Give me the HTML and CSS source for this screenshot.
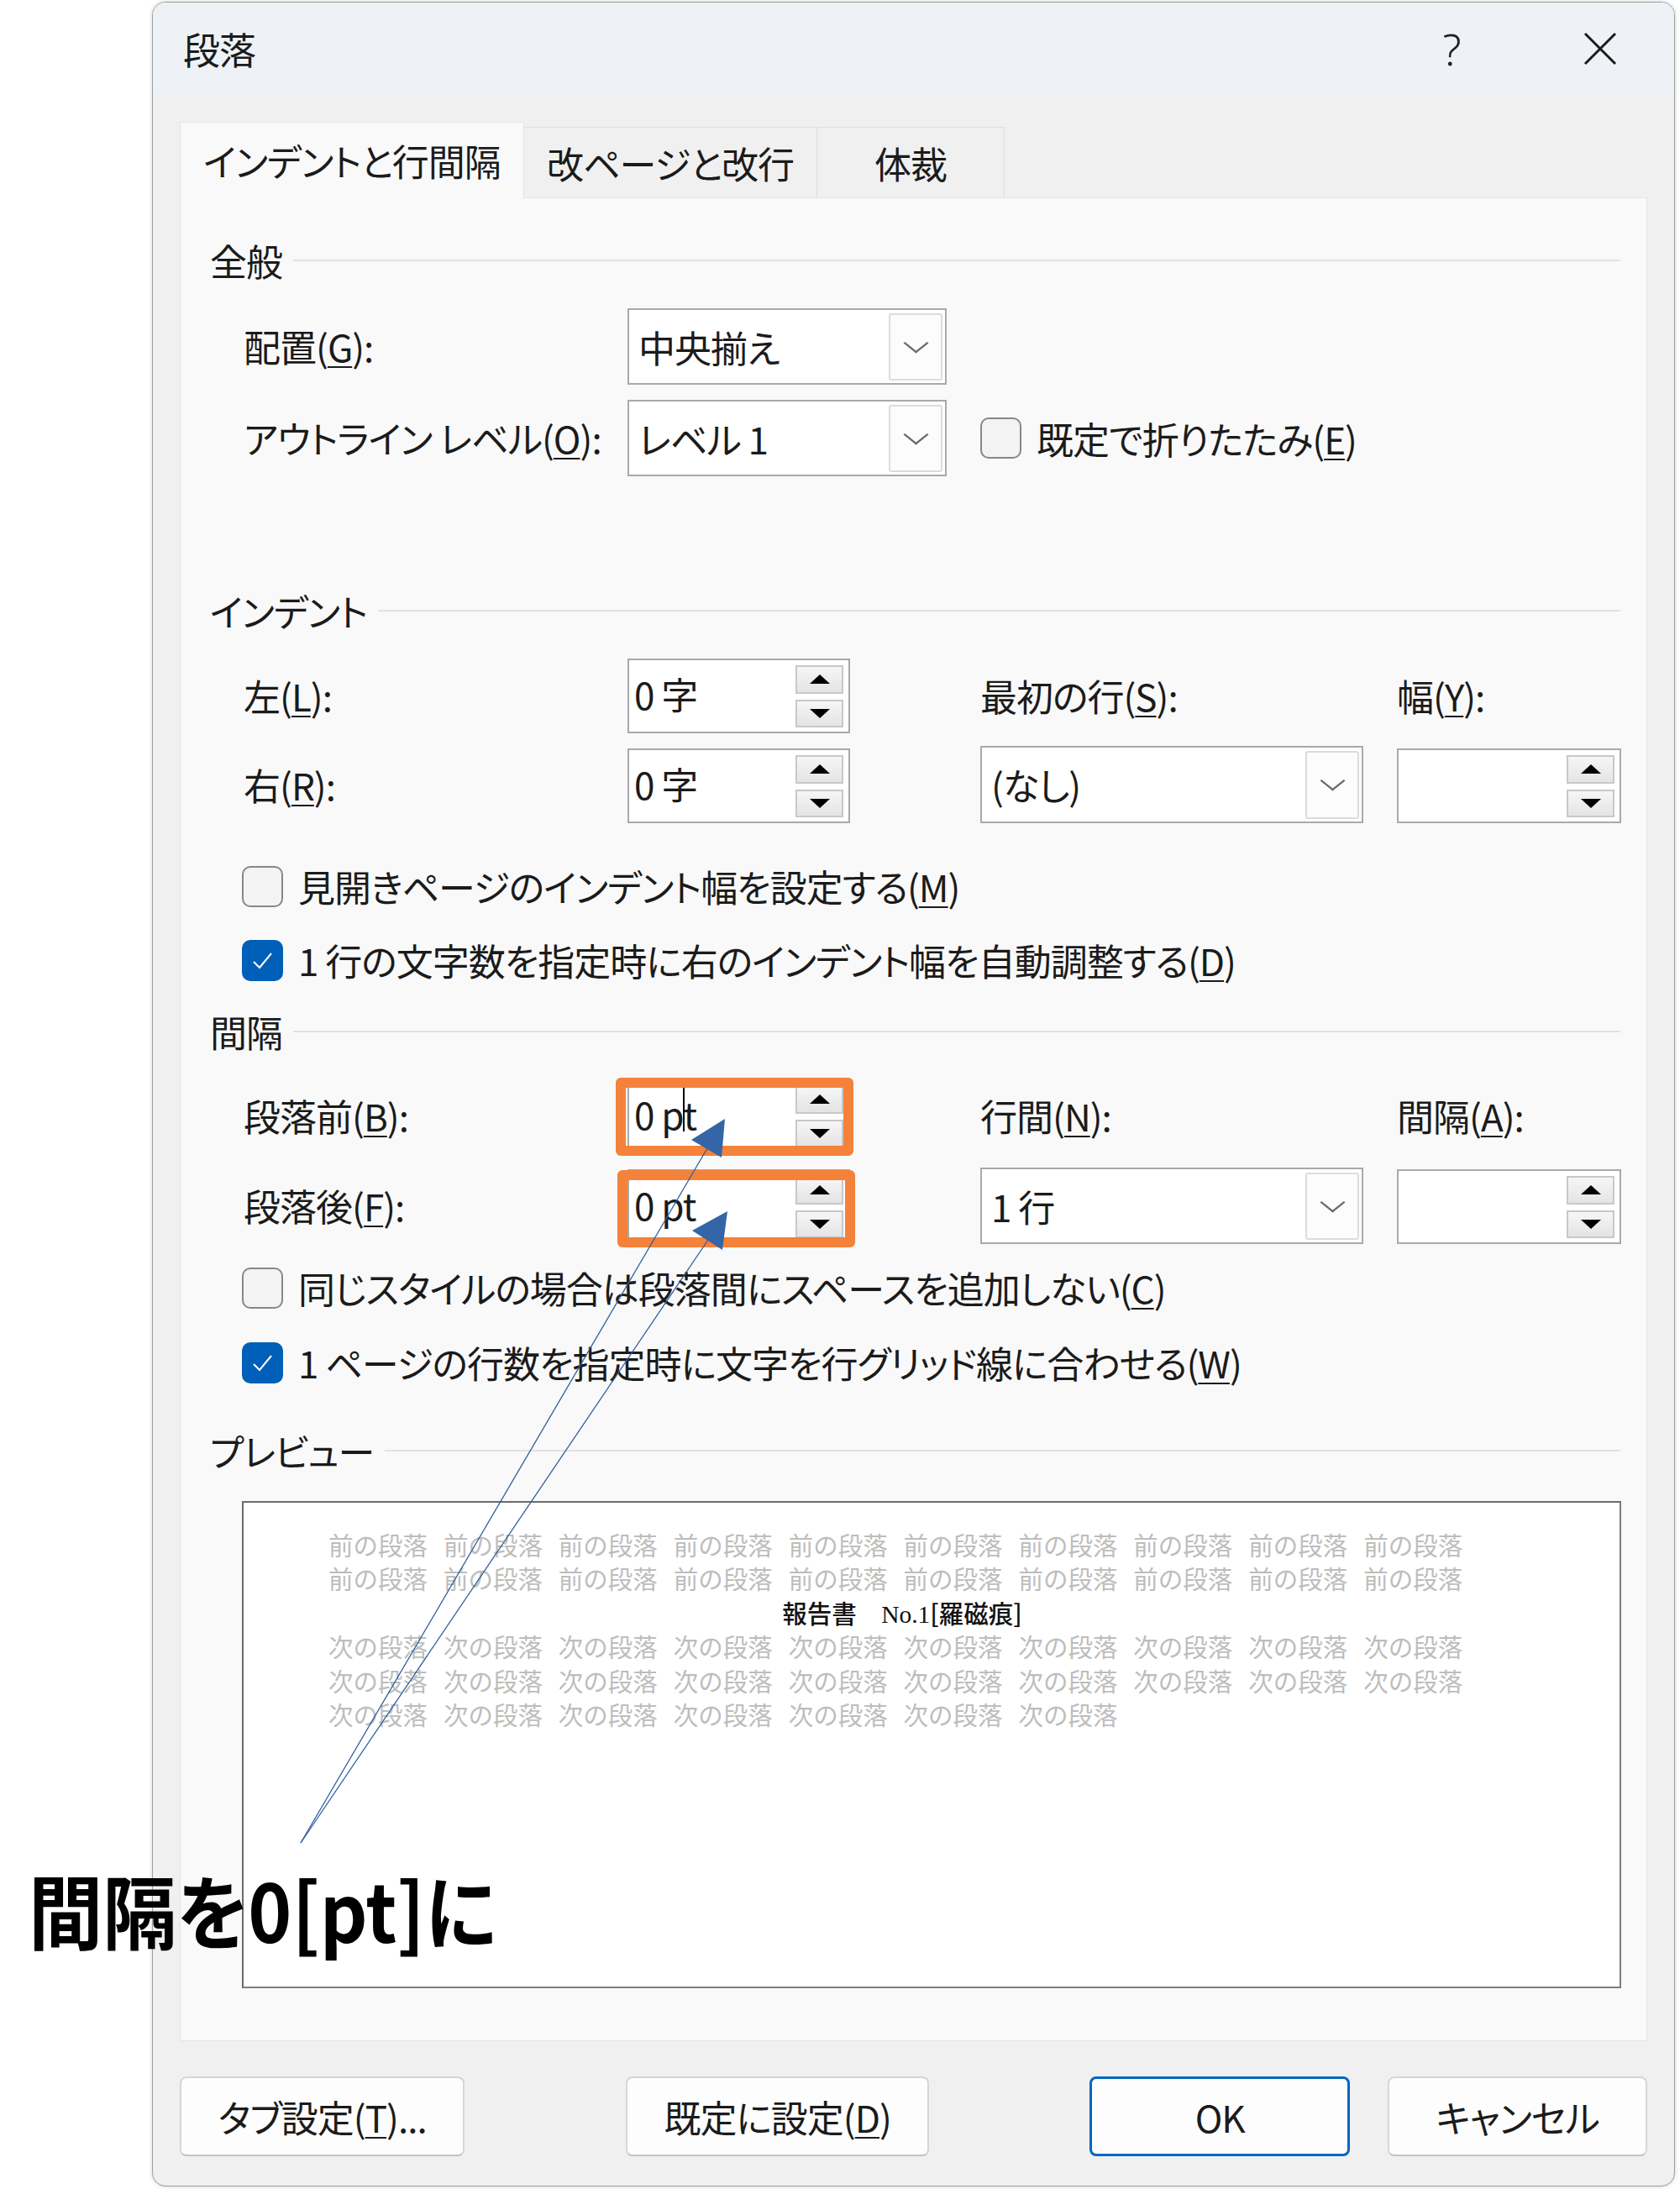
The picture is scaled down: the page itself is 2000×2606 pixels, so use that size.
FILE: index.html
```html
<!DOCTYPE html>
<html lang="ja">
<head>
<meta charset="utf-8">
<title>段落</title>
<link rel="stylesheet" href="styles.css">
</head>
<body>
<div class="dialog">
  <div class="titlebar">
    <span class="title">段落</span>
    <span class="help">?</span>
    <span class="close"><svg width="40" height="40" viewBox="0 0 40 40"><path d="M2 2 L38 38 M38 2 L2 38" stroke="#1a1a1a" stroke-width="3" fill="none"/></svg></span>
  </div>
  <div class="body">
    <div class="tabs">
      <div class="tab active t1">インデントと行間隔</div>
      <div class="tab t2">改ページと改行</div>
      <div class="tab t3">体裁</div>
    </div>
    <div class="panel">
      <div class="sec"><span>全般</span><i class="rule"></i></div>
      <div class="form g1">
        <div class="lbl">配置(<u>G</u>):</div>
        <div class="combo w380"><span class="val">中央揃え</span><span class="dd"><i class="chev"></i></span></div>
        <div></div><div></div>
        <div class="lbl">アウトライン レベル(<u>O</u>):</div>
        <div class="combo w380"><span class="val">レベル 1</span><span class="dd"><i class="chev"></i></span></div>
        <div class="chk inline span2"><span class="box"></span><span>既定で折りたたみ(<u>E</u>)</span></div>
      </div>

      <div class="sec s-indent"><span>インデント</span><i class="rule"></i></div>
      <div class="form g2">
        <div class="lbl">左(<u>L</u>):</div>
        <div class="spin"><span class="val">0 字</span><span class="btns"><b class="up"><i></i></b><b class="dn"><i></i></b></span></div>
        <div class="lbl">最初の行(<u>S</u>):</div>
        <div class="lbl">幅(<u>Y</u>):</div>
        <div class="lbl">右(<u>R</u>):</div>
        <div class="spin end"><span class="val">0 字</span><span class="btns"><b class="up"><i></i></b><b class="dn"><i></i></b></span></div>
        <div class="combo w456"><span class="val">(なし)</span><span class="dd"><i class="chev"></i></span></div>
        <div class="spin w267 end"><span class="val"></span><span class="btns"><b class="up"><i></i></b><b class="dn"><i></i></b></span></div>
      </div>
      <div class="chk c1"><span class="box"></span><span>見開きページのインデント幅を設定する(<u>M</u>)</span></div>
      <div class="chk c2"><span class="box on"><svg width="45" height="45" viewBox="0 0 45 45"><path d="M12 24 L19 31 L33 14" stroke="#fff" stroke-width="2" fill="none"/></svg></span><span>1 行の文字数を指定時に右のインデント幅を自動調整する(<u>D</u>)</span></div>

      <div class="sec s-space"><span>間隔</span><i class="rule"></i></div>
      <div class="form g3">
        <div class="lbl">段落前(<u>B</u>):</div>
        <div class="spin"><span class="val">0 p<span class="caret"></span>t</span><span class="btns"><b class="up"><i></i></b><b class="dn"><i></i></b></span></div>
        <div class="lbl">行間(<u>N</u>):</div>
        <div class="lbl">間隔(<u>A</u>):</div>
        <div class="lbl">段落後(<u>F</u>):</div>
        <div class="spin end"><span class="val">0 pt</span><span class="btns"><b class="up"><i></i></b><b class="dn"><i></i></b></span></div>
        <div class="combo w456"><span class="val">1 行</span><span class="dd"><i class="chev"></i></span></div>
        <div class="spin w267 end"><span class="val"></span><span class="btns"><b class="up"><i></i></b><b class="dn"><i></i></b></span></div>
      </div>
      <div class="chk c3"><span class="box"></span><span>同じスタイルの場合は段落間にスペースを追加しない(<u>C</u>)</span></div>
      <div class="chk c4"><span class="box on"><svg width="45" height="45" viewBox="0 0 45 45"><path d="M12 24 L19 31 L33 14" stroke="#fff" stroke-width="2" fill="none"/></svg></span><span>1 ページの行数を指定時に文字を行グリッド線に合わせる(<u>W</u>)</span></div>

      <div class="sec s-prev"><span>プレビュー</span><i class="rule"></i></div>
      <div class="preview">
        <div class="pv-row"><span>前の段落</span><span>前の段落</span><span>前の段落</span><span>前の段落</span><span>前の段落</span><span>前の段落</span><span>前の段落</span><span>前の段落</span><span>前の段落</span><span>前の段落</span></div>
        <div class="pv-row"><span>前の段落</span><span>前の段落</span><span>前の段落</span><span>前の段落</span><span>前の段落</span><span>前の段落</span><span>前の段落</span><span>前の段落</span><span>前の段落</span><span>前の段落</span></div>
        <div class="pv-row pv-main"><span>報告書　<span class="serif">No.1</span>[羅磁痕]</span></div>
        <div class="pv-row"><span>次の段落</span><span>次の段落</span><span>次の段落</span><span>次の段落</span><span>次の段落</span><span>次の段落</span><span>次の段落</span><span>次の段落</span><span>次の段落</span><span>次の段落</span></div>
        <div class="pv-row"><span>次の段落</span><span>次の段落</span><span>次の段落</span><span>次の段落</span><span>次の段落</span><span>次の段落</span><span>次の段落</span><span>次の段落</span><span>次の段落</span><span>次の段落</span></div>
        <div class="pv-row"><span>次の段落</span><span>次の段落</span><span>次の段落</span><span>次の段落</span><span>次の段落</span><span>次の段落</span><span>次の段落</span></div>
      </div>
    </div>
    <div class="buttons">
      <div class="btn b1">タブ設定(<u>T</u>)...</div>
      <div class="btn b2">既定に設定(<u>D</u>)</div>
      <div class="btn b3 ok">OK</div>
      <div class="btn b4">キャンセル</div>
    </div>
  </div>
</div>

<div class="hl hl1"></div>
<div class="hl hl2"></div>
<svg class="arrows" width="2000" height="2606" viewBox="0 0 2000 2606">
  <line x1="358" y1="2194" x2="842" y2="1367" stroke="#2f5f9f" stroke-width="1.3"/>
  <line x1="358" y1="2194" x2="843" y2="1476" stroke="#2f5f9f" stroke-width="1.3"/>
  <polygon points="863,1332 823,1357 859,1378" fill="#3465a6"/>
  <polygon points="866,1442 824,1465 860,1488" fill="#3465a6"/>
</svg>
<div class="note">間隔を0[pt]に</div>
</body>
</html>
```

FILE: styles.css
```css
* { box-sizing: border-box; margin: 0; padding: 0; }
html, body { background: #ffffff; }
body {
  width: 2000px;
  height: 2606px;
  position: relative;
  overflow: hidden;
  font-family: "Noto Sans CJK JP", "Noto Sans", sans-serif;
  font-feature-settings: "palt" 1;
  font-size: 44px;
  letter-spacing: -1px;
  color: #1b1b1b;
}
u { text-decoration-thickness: 2px; text-underline-offset: 5px; }

.dialog {
  margin: 2px 0 0 181px;
  width: 1813px;
  height: 2601px;
  border: 1px solid #9e9e9e;
  border-radius: 16px;
  background: #f0f0f0;
  overflow: hidden;
  box-shadow: 0 0 5px rgba(0,0,0,0.18);
}
.titlebar {
  height: 110px;
  background: #eef2f7;
  display: flex;
  align-items: center;
  padding-left: 36px;
  padding-right: 58px;
}
.title { flex: 1; line-height: 1; }
.help {
  width: 60px;
  text-align: center;
  font-family: "Noto Sans", sans-serif;
  font-weight: 300;
  font-size: 52px;
  line-height: 1;
  color: #222;
  margin-right: 117px;
}
.close { width: 60px; height: 40px; display: flex; justify-content: center; }

.body { padding: 32px 32px 0 32px; }
.tabs { display: flex; align-items: flex-end; height: 90px; }
.tab {
  height: 84px;
  display: flex;
  align-items: center;
  justify-content: center;
  background: #f0f0f0;
  border: 1px solid #dedede;
  border-bottom: none;
  border-left: none;
}
.tab.active {
  height: 91px;
  background: #f9f9f9;
  border: 1px solid #e4e4e4;
  border-bottom: none;
  margin-bottom: -1px;
  position: relative;
  z-index: 1;
}
.t1 { width: 410px; }
.t2 { width: 349px; }
.t3 { width: 223px; }

.panel {
  background: #f9f9f9;
  border: 1px solid #e4e4e4;
  padding: 50px 31px 62px 35px;
}
.sec { display: flex; align-items: center; height: 48px; line-height: 48px; }
.sec .rule { flex: 1; height: 2px; background: #e2e2e2; margin-left: 13px; }
.s-indent { margin-top: 136px; }
.s-space { margin-top: 36px; }
.s-prev { margin-top: 56px; }

.form {
  display: grid;
  grid-template-columns: 457px 420px 496px 267px;
  margin-left: 40px;
}
.g1 { grid-template-rows: 91px 91px; row-gap: 18px; margin-top: 33px; }
.g2 { grid-template-rows: 89px 92px; row-gap: 15px; margin-top: 33px; }
.g3 { grid-template-rows: 89px 91px; row-gap: 17px; margin-top: 32px; }
.lbl { align-self: center; line-height: 1.2; white-space: nowrap; }
.end { align-self: end; }

.combo {
  height: 100%;
  border: 2px solid #a9a9a9;
  background: #ffffff;
  display: flex;
  align-items: center;
  padding-left: 11px;
}
.w380 { width: 380px; }
.w456 { width: 456px; }
.combo .val { flex: 1; }
.dd {
  align-self: stretch;
  width: 64px;
  margin: 4px 3px 3px 0;
  border: 2px solid #dcdcdc;
  border-radius: 3px;
  background: #fcfcfc;
  display: flex;
  align-items: center;
  justify-content: center;
}
.chev {
  width: 17px;
  height: 17px;
  border-right: 2px solid #6a6a6a;
  border-bottom: 2px solid #6a6a6a;
  transform: translateY(-5px) scaleX(1.25) rotate(45deg);
}

.spin {
  width: 265px;
  height: 89px;
  border: 2px solid #a9a9a9;
  background: #ffffff;
  display: flex;
  align-items: center;
  padding-left: 6px;
}
.w267 { width: 267px; }
.spin .val { flex: 1; line-height: 1; padding-bottom: 6px; display: flex; align-items: center; }
.caret { display: inline-block; width: 2px; height: 55px; background: #000; margin: 0 -1px; transform: translateY(-6px); }
.btns {
  align-self: stretch;
  width: 57px;
  margin: 6px 6px 5px 0;
  display: flex;
  flex-direction: column;
  gap: 7px;
}
.btns b {
  flex: 1;
  border: 2px solid #c8c8c8;
  background: linear-gradient(#f6f6f6, #e4e4e4);
  display: flex;
  align-items: center;
  justify-content: center;
}
.btns .up i { width: 0; height: 0; border-left: 12px solid transparent; border-right: 12px solid transparent; border-bottom: 11px solid #000; }
.btns .dn i { width: 0; height: 0; border-left: 12px solid transparent; border-right: 12px solid transparent; border-top: 11px solid #000; }

.chk { display: flex; align-items: center; height: 50px; margin-left: 38px; white-space: nowrap; }
.chk.inline { margin-left: 0; align-self: center; }
.span2 { grid-column: span 2; }
.box {
  width: 49px;
  height: 49px;
  border: 2px solid #878787;
  border-radius: 10px;
  background: #f3f3f3;
  margin-right: 18px;
  flex: none;
  display: flex;
  align-items: center;
  justify-content: center;
}
.box.on { background: #005fb8; border-color: #005fb8; }
.c1 { margin-top: 50px; }
.c2 { margin-top: 38px; }
.c3 { margin-top: 27px; }
.c4 { margin-top: 39px; }

.preview {
  margin: 36px 0 0 38px;
  width: 1642px;
  height: 580px;
  border: 2px solid #7d7d7d;
  border-top-color: #6b6b6b;
  border-left-color: #6b6b6b;
  background: #ffffff;
  padding: 29px 0 0 101px;
}
.pv-row {
  display: flex;
  gap: 18.9px;
  width: 1366px;
  height: 40.4px;
  line-height: 40.4px;
  font-size: 29.5px;
  letter-spacing: 0;
  color: #bdbdbd;
  font-feature-settings: normal;
  white-space: nowrap;
}
.pv-main { justify-content: center; color: #111; font-weight: 500; }
.serif { font-family: "Liberation Serif", serif; font-weight: 400; }

.buttons { display: flex; margin-top: 42px; }
.btn {
  height: 95px;
  background: #fdfdfd;
  border: 2px solid #d6d6d6;
  border-bottom-color: #c3c3c3;
  border-radius: 8px;
  display: flex;
  align-items: center;
  justify-content: center;
}
.b1 { width: 340px; }
.b2 { width: 361px; margin-left: 192px; }
.b3 { width: 311px; margin-left: 191px; }
.b4 { width: 309px; margin-left: 45px; }
.ok { border: 3px solid #0067c0; }

.hl {
  position: absolute;
  border: 12px solid #f4823a;
  border-radius: 6px;
}
.hl1 { left: 733px; top: 1283px; width: 283px; height: 93px; }
.hl2 { left: 735px; top: 1393px; width: 283px; height: 92px; }
.arrows { position: absolute; left: 0; top: 0; pointer-events: none; }
.note {
  position: absolute;
  left: 34px;
  top: 2224px;
  font-size: 96px;
  font-weight: 700;
  line-height: 1;
  letter-spacing: 0;
  color: #000;
  white-space: nowrap;
  transform: scaleX(0.92);
  transform-origin: 0 0;
}
```
